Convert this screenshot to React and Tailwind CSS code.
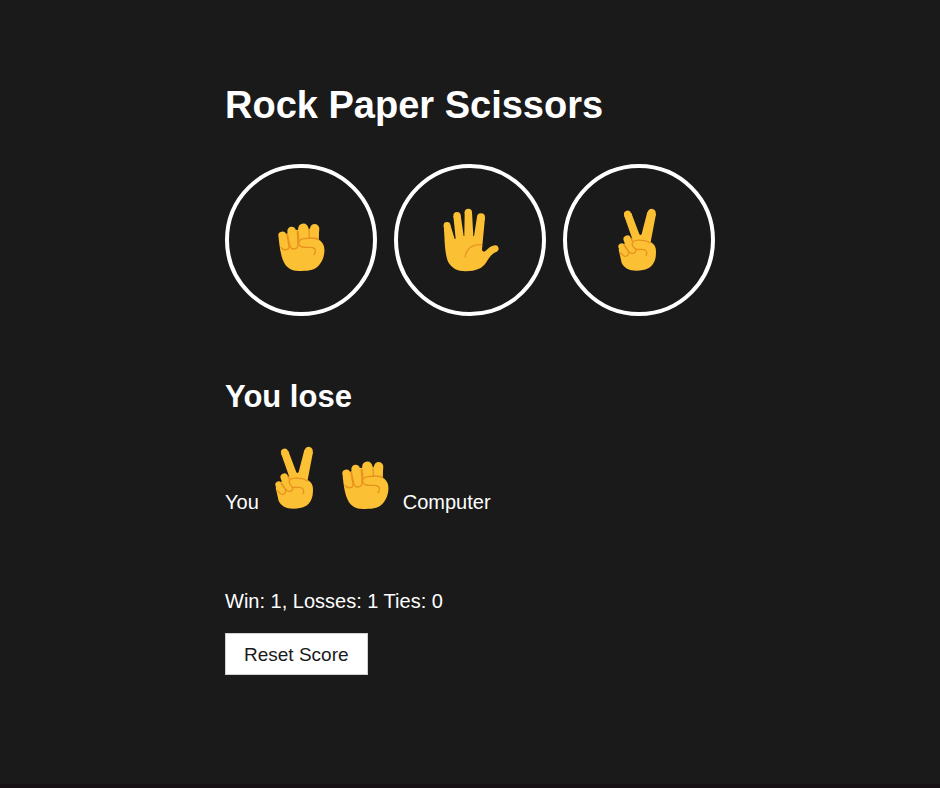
import { useState } from "react";

const icons = {
  Rock: RockIcon,
  Paper: PaperIcon,
  Scissors: ScissorsIcon,
};

function RockIcon() {
  return (
    <svg viewBox="38 53 141 147" className="h-[49px] w-[47px]" aria-hidden="true">
      <g stroke="#fbc033" strokeLinecap="round">
        <path strokeWidth="24" d="M51 91L60 124" />
        <path strokeWidth="26" d="M79 77L86 122" />
        <path strokeWidth="31" d="M114 70L115 105" />
        <path strokeWidth="28" d="M148 70L145 105" />
      </g>
      <path
        fill="#fbc033"
        d="M40 98L66 84L92 74L130 70L161 74L160 103C174 110 179 126 177 141C175 159 170 169 161 180C150 193 134 197 109 197C84 197 72 193 60 178C49 161 45 139 42 116Z"
      />
      <g fill="none" stroke="#e8931f" strokeWidth="4" strokeLinecap="round" strokeLinejoin="round">
        <path d="M65 88L71 124C71 135 53 137 47 126" />
        <path d="M66 86L74 123C79 136 98 132 98 119L96 78" />
        <path d="M131 72L132 97M160 103C153 97 129 98 116 100C102 102 99 108 100 116C103 125 116 127 131 126C145 125 152 131 150 139Q149 145 146 148" />
        <path d="M98 78L101 106" />
      </g>
    </svg>
  );
}

function PaperIcon() {
  return (
    <svg viewBox="26 24 174 192" className="h-16 w-[58px]" aria-hidden="true">
      <g fill="#fbc033">
        <circle cx="44" cy="76" r="10" />
        <circle cx="74" cy="47" r="11" />
        <circle cx="108" cy="37" r="11" />
        <circle cx="146" cy="52" r="12" />
        <path d="M34 76L54 74L67 117L70 116L63 48L85 46L94 108H96L97 37H119L123 109H125L134 50L158 53L149 148C149 155 155 157 160 152L172 142Q179 137 188 136A10 10 0 0 1 193 155C179 160 170 173 162 187C150 206 130 214 100 214C74 214 58 204 48 187C39 168 37 133 36 104Z" />
      </g>
      <path d="M98 171C102 145 121 133 147 134" fill="none" stroke="#eb9824" strokeWidth="4" strokeLinecap="round" />
    </svg>
  );
}

function ScissorsIcon() {
  return (
    <svg viewBox="41 25 129 192" className="h-16 w-[43px]" aria-hidden="true">
      <g stroke="#fbc033" strokeLinecap="round">
        <path strokeWidth="22" d="M70 44L71 47" />
        <path strokeWidth="25" d="M142 40L141 45" />
        <path strokeWidth="23" d="M69 119L84 152" />
        <path strokeWidth="20" d="M52 141L62 165" />
      </g>
      <path
        fill="#fbc033"
        d="M59 47L81 40L105 104Q109 109 112 103L129 37L155 43L139 127C150 133 155 142 155 154C155 168 154 178 149 188C141 205 124 213 97 213C72 213 60 205 52 190L43 150L62 130L84 118Z"
      />
      <g fill="none" stroke="#e8931f" strokeWidth="4" strokeLinecap="round" strokeLinejoin="round">
        <path d="M60 137L73 156C75 167 66 172 59 169L48 160" />
        <path d="M60 135C64 146 74 159 82 161C92 162 97 154 93 148C86 142 81 133 86 126C92 120 109 121 121 123Q131 125 137 130" />
        <path d="M80 116L84 124M93 148C101 151 111 148 119 150C128 153 129 161 125 168" />
      </g>
    </svg>
  );
}

export default function App() {
  const [game, setGame] = useState({
    player: "Scissors",
    computer: "Rock",
    result: "You lose",
    wins: 1,
    losses: 1,
    ties: 0,
  });

  function play(player) {
    const moves = Object.keys(icons);
    const computer = moves[Math.floor(Math.random() * 3)];
    const outcome = (moves.indexOf(player) - moves.indexOf(computer) + 3) % 3;
    setGame((previous) => ({
      player,
      computer,
      result: ["Tie", "You win", "You lose"][outcome],
      wins: previous.wins + (outcome === 1 ? 1 : 0),
      losses: previous.losses + (outcome === 2 ? 1 : 0),
      ties: previous.ties + (outcome === 0 ? 1 : 0),
    }));
  }

  const PlayerIcon = icons[game.player];
  const ComputerIcon = icons[game.computer];

  return (
    <div className="flex min-h-screen justify-center border-b-4 border-[#171015] bg-[#1a1a1a] px-4 py-20 font-['Liberation_Sans',Arial,sans-serif] text-xl leading-6 text-white">
      <main className="w-full max-w-[490px]">
        <h1 className="text-[38px] leading-[50px] font-bold">Rock Paper Scissors</h1>
        <div className="mt-[34px] flex flex-wrap justify-between gap-y-4">
          {Object.entries(icons).map(([name, Icon]) => (
            <button
              key={name}
              type="button"
              aria-label={name}
              onClick={() => play(name)}
              className="flex size-[152px] cursor-pointer items-end justify-center rounded-full border-4 border-white pb-10"
            >
              <Icon />
            </button>
          ))}
        </div>
        <h2 className="mt-[61px] text-[31px] leading-10 font-bold">{game.result}</h2>
        <div className="mt-[29px] flex items-end">
          <span className="mr-4">You</span>
          <span className="flex items-end gap-6 pb-1">
            <PlayerIcon />
            <ComputerIcon />
          </span>
          <span className="ml-[14px]">Computer</span>
        </div>
        <p className="mt-[75px]">
          Win: {game.wins}, Losses: {game.losses} Ties: {game.ties}
        </p>
        <button
          type="button"
          onClick={() => setGame({ ...game, wins: 0, losses: 0, ties: 0 })}
          className="mt-5 h-[42px] cursor-pointer border border-[#d0d0d0] bg-white px-[18px] pt-[2px] text-[19px] text-[#1a1a1a]"
        >
          Reset Score
        </button>
      </main>
    </div>
  );
}
